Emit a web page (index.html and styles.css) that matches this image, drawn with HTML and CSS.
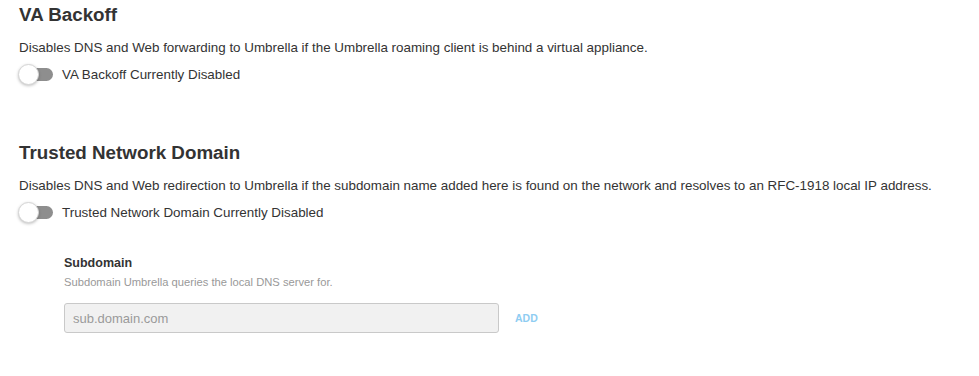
FILE: index.html
```html
<!doctype html>
<html lang="en">
    <head>
        <meta charset="UTF-8" />
        <meta name="viewport" content="width=device-width, initial-scale=1.0" />
        <title>Roaming Client Settings</title>
        <link rel="stylesheet" href="styles.css">
    </head>
    <body>
        <div class="settings">
            <section class="setting">
                <h2>VA Backoff</h2>
                <p class="desc">
                    Disables DNS and Web forwarding to Umbrella if the Umbrella
                    roaming client is behind a virtual appliance.
                </p>
                <label class="toggle-row">
                    <span class="toggle"><span class="knob"></span></span>
                    <span class="toggle-label">VA Backoff Currently Disabled</span>
                </label>
            </section>

            <section class="setting">
                <h2>Trusted Network Domain</h2>
                <p class="desc">
                    Disables DNS and Web redirection to Umbrella if the subdomain
                    name added here is found on the network and resolves to an
                    RFC-1918 local IP address.
                </p>
                <label class="toggle-row">
                    <span class="toggle"><span class="knob"></span></span>
                    <span class="toggle-label">Trusted Network Domain Currently Disabled</span>
                </label>

                <div class="subdomain">
                    <div class="field-title">Subdomain</div>
                    <div class="field-help">Subdomain Umbrella queries the local DNS server for.</div>
                    <div class="field-row">
                        <input class="field-input" type="text" placeholder="sub.domain.com" disabled>
                        <button class="add-button">ADD</button>
                    </div>
                </div>
            </section>
        </div>
    </body>
</html>
```

FILE: styles.css
```css
* {
    margin: 0;
    padding: 0;
    box-sizing: border-box;
}
body {
    font-family: "Liberation Sans", Arial, sans-serif;
    background-color: #ffffff;
    color: #333333;
    padding: 4px 19px 0;
}
h2 {
    font-size: 18.8px;
    line-height: 22px;
    font-weight: bold;
    color: #333333;
}
.setting {
    margin-bottom: 56px;
}
.desc {
    font-size: 13.4px;
    line-height: 16px;
    margin-top: 14px;
    color: #333333;
}
.toggle-row {
    display: flex;
    align-items: center;
    margin-top: 6px;
    height: 24px;
}
.toggle {
    position: relative;
    width: 34px;
    height: 13px;
    border-radius: 7px;
    background-color: #8e8e8e;
}
.knob {
    position: absolute;
    left: -1px;
    top: -4px;
    width: 21px;
    height: 21px;
    border-radius: 50%;
    background-color: #ffffff;
    border: 1px solid #d6d6d6;
    box-shadow: 0 1px 3px rgba(0, 0, 0, 0.25);
}
.toggle-label {
    font-size: 13.4px;
    margin-left: 9px;
    color: #333333;
}
.subdomain {
    margin-top: 32px;
    margin-left: 45px;
}
.field-title {
    font-size: 12.5px;
    font-weight: bold;
    line-height: 15px;
}
.field-help {
    font-size: 11.2px;
    line-height: 14px;
    margin-top: 4px;
    color: #999999;
}
.field-row {
    display: flex;
    align-items: center;
    margin-top: 14px;
}
.field-input {
    width: 435px;
    height: 30px;
    border: 1px solid #c9c9c9;
    border-radius: 3px;
    background-color: #f1f1f1;
    padding: 0 8px;
    font-family: inherit;
    font-size: 13px;
    color: #333333;
}
.field-input::placeholder {
    color: #9a9a9a;
}
.add-button {
    border: none;
    background: none;
    font-family: inherit;
    font-size: 10.5px;
    font-weight: bold;
    color: #8fcdf2;
    margin-left: 16px;
    cursor: pointer;
}
```
